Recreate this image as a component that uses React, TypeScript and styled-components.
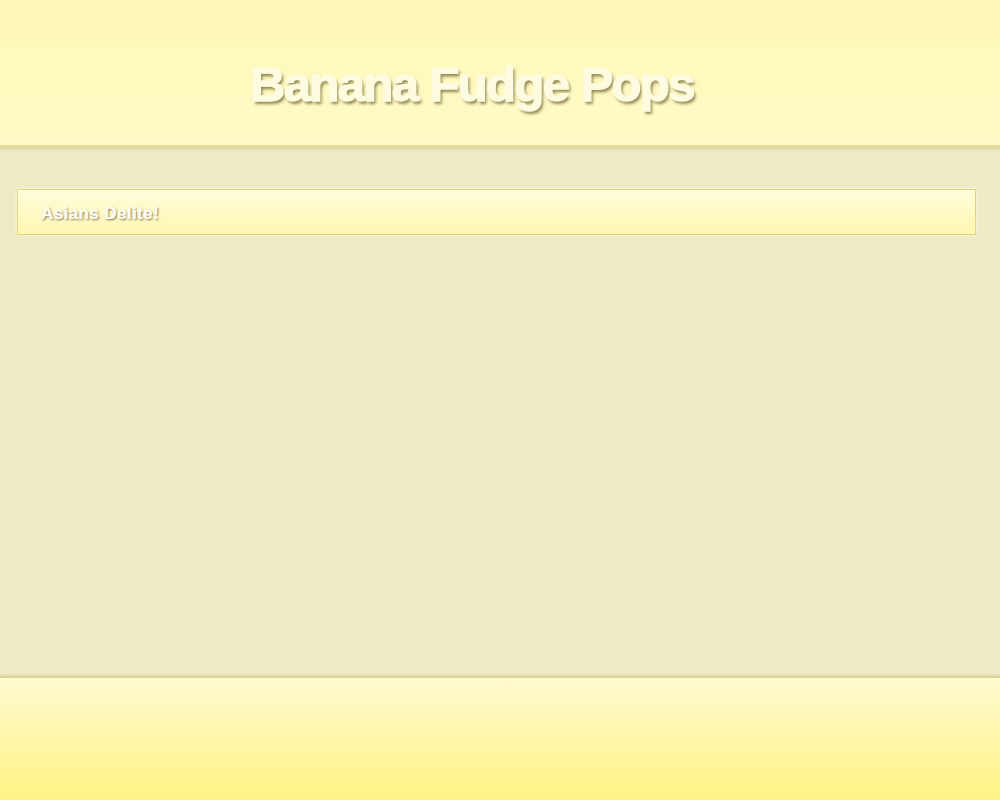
import React from 'react';
import styled, { createGlobalStyle } from 'styled-components';

const Global = createGlobalStyle`
	html, body {
		margin: 0;
		padding: 0;
		height: 100%;
	}
	body {
		background: #eeeac3;
		font-family: 'Liberation Sans', Arial, sans-serif;
	}
	#root {
		min-height: 100%;
	}
`;

const Page = styled.div`
	display: flex;
	flex-direction: column;
	height: 800px;
`;

const Header = styled.header`
	height: 147px;
	flex-shrink: 0;
	display: flex;
	align-items: center;
	box-sizing: border-box;
	padding: 22px 0 0 250px;
	background: linear-gradient(to bottom, #fff8b6 0%, #fffac6 100%);
	border-bottom: 2px solid #e3da98;
	box-shadow: 0 2px 3px rgba(170, 160, 90, 0.3);
`;

const Title = styled.h1`
	margin: 0;
	font-family: 'Liberation Sans', Arial, sans-serif;
	font-weight: 900;
	font-size: 49px;
	letter-spacing: -1.6px;
	color: #fffbe0;
	-webkit-text-stroke: 1.3px #fffbe0;
	text-shadow: 2px 3px 3px rgba(110, 100, 50, 0.75);
`;

const Main = styled.main`
	flex: 1;
	padding: 42px 24px 0 17px;
`;

const Panel = styled.div`
	height: 44px;
	display: flex;
	align-items: center;
	padding-left: 23px;
	border: 1px solid #e0d57e;
	background: linear-gradient(to bottom, #fffcdc 0%, #fff7b0 100%);
	box-shadow: 0 0 4px rgba(255, 255, 240, 0.9);
`;

const PanelTitle = styled.h2`
	margin: 3px 0 0;
	font-size: 17px;
	font-weight: 900;
	letter-spacing: 0.4px;
	color: #fffdf0;
	-webkit-text-stroke: 0.5px #fffdf0;
	text-shadow: 1px 1px 2px rgba(90, 80, 40, 0.9);
`;

const Footer = styled.footer`
	height: 122px;
	flex-shrink: 0;
	border-top: 2px solid #ddd49a;
	box-shadow: 0 -1px 3px rgba(170, 160, 90, 0.25);
	background: linear-gradient(to bottom, #fffad0 0%, #fff285 100%);
`;

export default function App() {
	return (
		<>
			<Global />
			<Page>
				<Header>
					<Title>Banana Fudge Pops</Title>
				</Header>
				<Main>
					<Panel>
						<PanelTitle>Asians Delite!</PanelTitle>
					</Panel>
				</Main>
				<Footer />
			</Page>
		</>
	);
}
